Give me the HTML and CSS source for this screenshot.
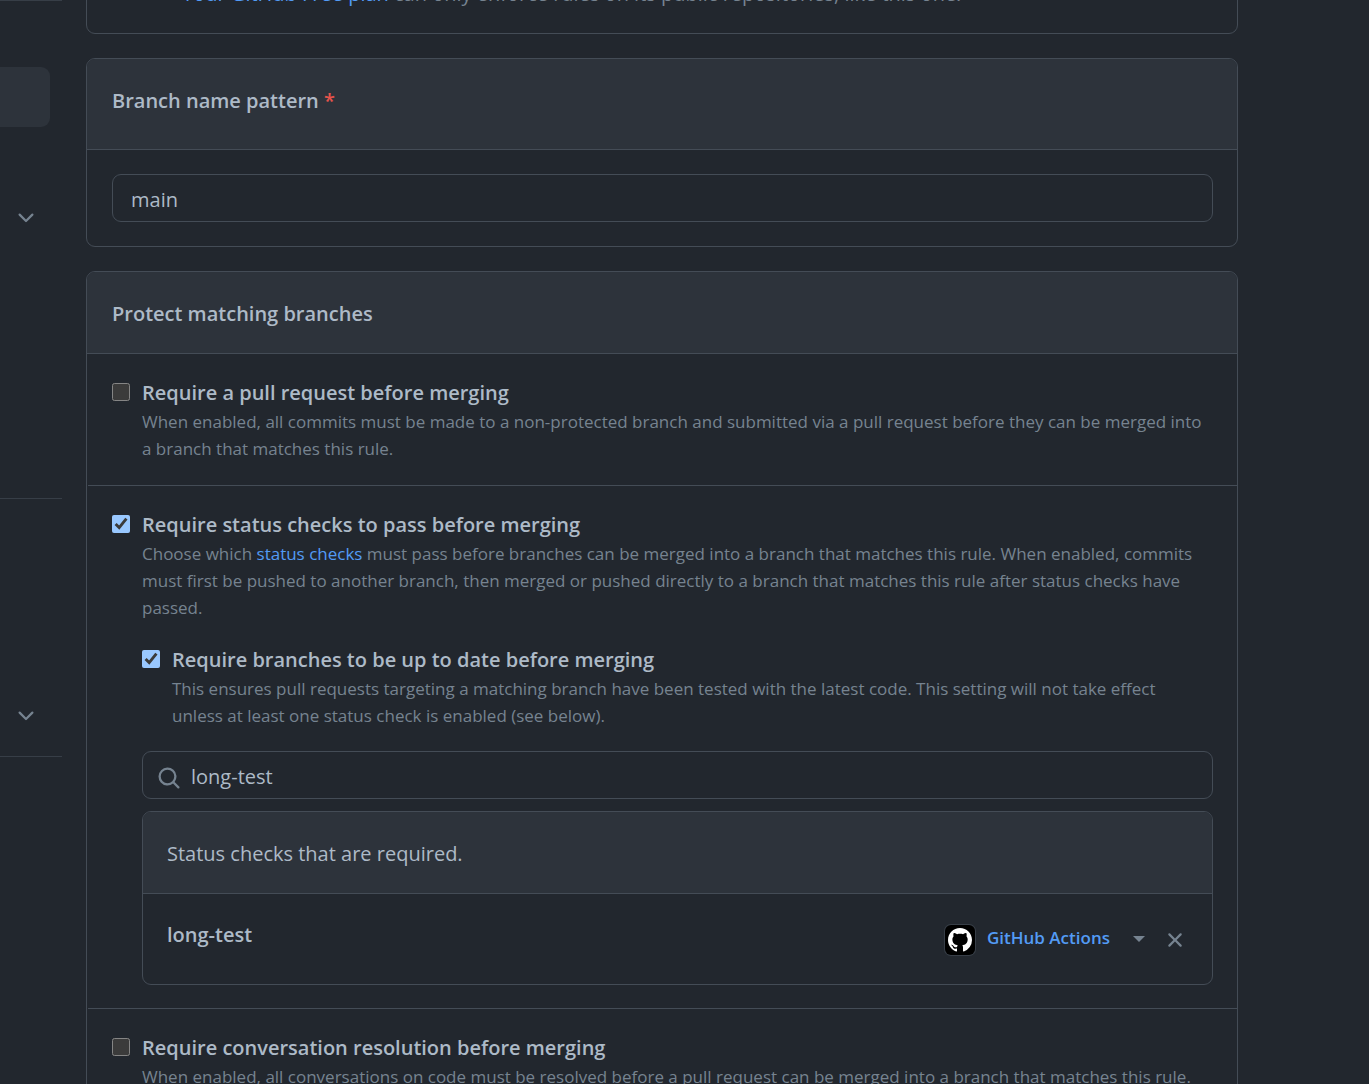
FILE: index.html
```html
<!DOCTYPE html>
<html lang="en">
<head>
    <meta charset="UTF-8">
    <meta name="viewport" content="width=device-width, initial-scale=1.0">
    <title>Branch protection rule</title>
    <link rel="stylesheet" href="styles.css">
</head>
<body>
    <div class="layout">
        <!-- Settings menu -->
        <nav class="sidebar">
            <ul class="menu">
                <li></li>
                <li class="active"></li>
                <li></li>
                <li>
                    <button type="button" class="icon-button" aria-label="Expand">
                        <svg width="24" height="24" viewBox="0 0 16 16"><path d="M12.78 5.22a.749.749 0 0 1 0 1.06l-4.25 4.25a.749.749 0 0 1-1.06 0L3.22 6.28a.749.749 0 1 1 1.06-1.06L8 8.939l3.72-3.719a.749.749 0 0 1 1.06 0Z"/></svg>
                    </button>
                </li>
                <li></li>
                <li></li>
                <li></li>
                <li></li>
            </ul>
            <ul class="menu">
                <li></li>
                <li></li>
                <li></li>
                <li>
                    <button type="button" class="icon-button" aria-label="Expand">
                        <svg width="24" height="24" viewBox="0 0 16 16"><path d="M12.78 5.22a.749.749 0 0 1 0 1.06l-4.25 4.25a.749.749 0 0 1-1.06 0L3.22 6.28a.749.749 0 1 1 1.06-1.06L8 8.939l3.72-3.719a.749.749 0 0 1 1.06 0Z"/></svg>
                    </button>
                </li>
            </ul>
            <ul class="menu"></ul>
        </nav>

        <main class="content">
            <section class="box plan-box">
                <p class="note"><a href="#">Your GitHub Free plan</a> can only enforce rules on its public repositories, like this one.</p>
            </section>

            <section class="box">
                <div class="box-header pattern-header">
                    <label for="pattern">Branch name pattern <span class="required">*</span></label>
                </div>
                <div class="box-body">
                    <input type="text" id="pattern" class="text-input" value="main">
                </div>
            </section>

            <section class="box">
                <div class="box-header">
                    <h2>Protect matching branches</h2>
                </div>

                <div class="rule">
                    <input type="checkbox" id="pull-request">
                    <div class="rule-text">
                        <label for="pull-request">Require a pull request before merging</label>
                        <p class="note">When enabled, all commits must be made to a non-protected branch and submitted via a pull request before they can be merged into a branch that matches this rule.</p>
                    </div>
                </div>

                <div class="rule">
                    <input type="checkbox" id="status-checks" checked>
                    <div class="rule-text">
                        <label for="status-checks">Require status checks to pass before merging</label>
                        <p class="note">Choose which <a href="#">status checks</a> must pass before branches can be merged into a branch that matches this rule. When enabled, commits must first be pushed to another branch, then merged or pushed directly to a branch that matches this rule after status checks have passed.</p>

                        <div class="sub-rule">
                            <input type="checkbox" id="up-to-date" checked>
                            <div class="rule-text">
                                <label for="up-to-date">Require branches to be up to date before merging</label>
                                <p class="note">This ensures pull requests targeting a matching branch have been tested with the latest code. This setting will not take effect unless at least one status check is enabled (see below).</p>
                            </div>
                        </div>

                        <div class="search">
                            <svg width="24" height="24" viewBox="0 0 16 16"><path d="M10.68 11.74a6 6 0 0 1-7.922-8.982 6 6 0 0 1 8.982 7.922l3.04 3.04a.749.749 0 0 1-.326 1.275.749.749 0 0 1-.734-.215ZM11.5 7a4.499 4.499 0 1 0-8.997 0A4.499 4.499 0 0 0 11.5 7Z"/></svg>
                            <input type="text" class="text-input" value="long-test" aria-label="Search for status checks">
                        </div>

                        <div class="box checks">
                            <div class="box-header">Status checks that are required.</div>
                            <div class="check">
                                <strong>long-test</strong>
                                <div class="check-source">
                                    <svg class="avatar" width="32" height="32" viewBox="0 0 32 32">
                                        <rect class="avatar-ring" width="32" height="32" rx="7"/>
                                        <rect class="avatar-back" x="1" y="1" width="30" height="30" rx="6"/>
                                        <path class="avatar-mark" transform="translate(4 4) scale(1.5)" d="M8 0C3.58 0 0 3.58 0 8c0 3.54 2.29 6.53 5.47 7.59.4.07.55-.17.55-.38 0-.19-.01-.82-.01-1.49-2.01.37-2.53-.49-2.69-.94-.09-.23-.48-.94-.82-1.13-.28-.15-.68-.52-.01-.53.63-.01 1.08.58 1.23.82.72 1.21 1.87.87 2.33.66.07-.52.28-.87.51-1.07-1.78-.2-3.64-.89-3.64-3.95 0-.87.31-1.59.82-2.15-.08-.2-.36-1.02.08-2.12 0 0 .67-.21 2.2.82.64-.18 1.32-.27 2-.27.68 0 1.36.09 2 .27 1.53-1.04 2.2-.82 2.2-.82.44 1.1.16 1.92.08 2.12.51.56.82 1.27.82 2.15 0 3.07-1.87 3.75-3.65 3.95.29.25.54.73.54 1.48 0 1.07-.01 1.93-.01 2.2 0 .21.15.46.55.38A8.013 8.013 0 0 0 16 8c0-4.42-3.58-8-8-8z"/>
                                    </svg>
                                    <select class="source-select" aria-label="Status check source">
                                        <option>GitHub Actions</option>
                                    </select>
                                    <svg class="caret" width="12" height="9" viewBox="0 0 12 9"><path d="M0 0h12L6 6z"/></svg>
                                    <button type="button" class="icon-button" aria-label="Remove">
                                        <svg width="24" height="24" viewBox="0 0 16 16"><path d="M3.72 3.72a.75.75 0 0 1 1.06 0L8 6.94l3.22-3.22a.749.749 0 0 1 1.275.326.749.749 0 0 1-.215.734L9.06 8l3.22 3.22a.749.749 0 0 1-.326 1.275.749.749 0 0 1-.734-.215L8 9.06l-3.22 3.22a.751.751 0 0 1-1.042-.018.751.751 0 0 1-.018-1.042L6.94 8 3.72 4.78a.75.75 0 0 1 0-1.06Z"/></svg>
                                    </button>
                                </div>
                            </div>
                        </div>
                    </div>
                </div>

                <div class="rule">
                    <input type="checkbox" id="conversation">
                    <div class="rule-text">
                        <label for="conversation">Require conversation resolution before merging</label>
                        <p class="note">When enabled, all conversations on code must be resolved before a pull request can be merged into a branch that matches this rule.</p>
                    </div>
                </div>
            </section>
        </main>
    </div>
</body>
</html>
```
FILE: styles.css
```css
:root {
    color-scheme: dark;
}
* {
    box-sizing: border-box;
}
body {
    margin: 0;
    height: 100vh;
    overflow: hidden;
    background: #22272e;
    color: #adbac7;
    font-family: "Open Sans", "Noto Sans", sans-serif;
    font-size: 20px;
    line-height: 30px;
}
a {
    color: #539bf5;
    text-decoration: none;
}
svg {
    display: block;
    fill: #768390;
}
.layout {
    display: flex;
    gap: 24px;
    padding-right: 131px;
}
.sidebar {
    flex: 0 0 62px;
}
.menu {
    list-style: none;
    margin: 0;
    padding: 6px 12px 11px 0;
    border-top: 1px solid #373e47;
}
.menu li {
    display: flex;
    align-items: center;
    justify-content: flex-end;
    height: 60px;
    padding-right: 12px;
    border-radius: 0 9px 9px 0;
}
.menu .active {
    background: #2d333b;
}
.icon-button {
    padding: 0;
    border: none;
    background: none;
    cursor: pointer;
}
.menu .icon-button {
    padding-top: 2px;
}
.content {
    flex: 1;
    min-width: 0;
}
.box {
    margin-bottom: 24px;
    border: 1px solid #444c56;
    border-radius: 9px;
}
/* scrolled partly past the top edge */
.plan-box {
    margin-top: -22px;
    padding: 0 24px 24px 95px;
}
.plan-box .note {
    font-size: 20px;
    line-height: 30px;
}
.box-header {
    padding: 27px 24px 24px 25px;
    background: #2d333b;
    border-bottom: 1px solid #444c56;
    border-radius: 8px 8px 0 0;
}
.pattern-header {
    padding-bottom: 33px;
}
.box-header h2,
.box-header label,
.rule-text label,
.check strong {
    display: block;
    margin: 0;
    font-size: 20px;
    font-weight: 600;
}
.required {
    color: #e5534b;
}
.box-body {
    padding: 24px 24px 24px 25px;
}
.text-input {
    display: block;
    width: 100%;
    height: 48px;
    padding: 2px 18px 0;
    border: 1px solid #444c56;
    border-radius: 9px;
    background: #22272e;
    color: #adbac7;
    font: inherit;
}
.rule {
    display: flex;
    gap: 12px;
    margin-left: 1px;
    padding: 24px 24px 23px;
}
.rule + .rule {
    border-top: 1px solid #444c56;
}
input[type="checkbox"] {
    flex: none;
    width: 18px;
    height: 18px;
    margin: 5px 0 0;
}
.rule-text {
    flex: 1;
    min-width: 0;
}
.note {
    margin: 0;
    color: #768390;
    font-size: 17px;
    line-height: 27px;
}
.sub-rule {
    display: flex;
    gap: 12px;
    margin: 24px 0 22px;
    padding-right: 24px;
}
.search {
    position: relative;
    margin-bottom: 12px;
}
.search svg {
    position: absolute;
    top: 15px;
    left: 15px;
}
.search .text-input {
    padding-left: 48px;
}
.checks {
    margin-bottom: 0;
}
.checks .box-header {
    padding-left: 24px;
}
.check {
    display: flex;
    justify-content: space-between;
    padding: 26px 25px 26px 24px;
}
.check-source {
    display: flex;
    align-items: center;
    height: 36px;
    margin-top: 2px;
}
.avatar-ring {
    fill: #373e47;
}
.avatar-back {
    fill: #000;
}
.avatar-mark {
    fill: #fff;
}
.source-select {
    appearance: none;
    margin-right: 23px;
    padding: 0 0 4px 11px;
    border: none;
    background: none;
    color: #539bf5;
    font: inherit;
    font-size: 17px;
    font-weight: 600;
}
.caret {
    margin-right: 18px;
}
```
